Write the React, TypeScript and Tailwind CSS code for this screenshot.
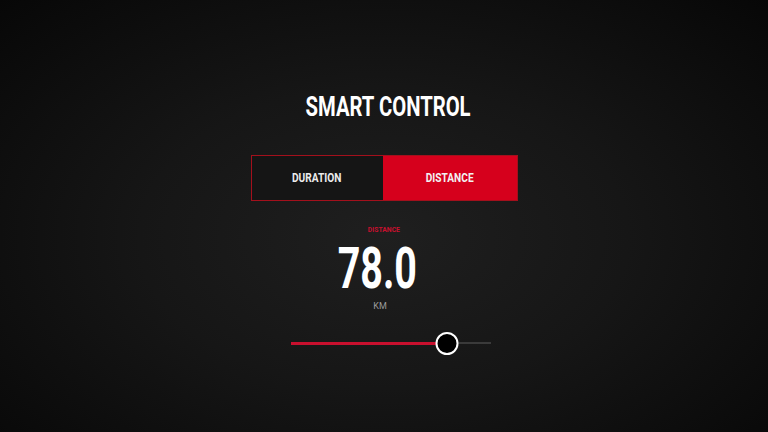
import React, { useState } from "react";

const font = { fontFamily: 'Roboto, "Liberation Sans", sans-serif' };

export default function App() {
  const [mode, setMode] = useState<"duration" | "distance">("distance");
  const value = 78.0;
  const pct = 78;

  return (
    <div
      className="w-[768px] h-[432px] flex flex-col items-center text-white bg-[radial-gradient(ellipse_at_50%_55%,#1f1f1f_0%,#161616_45%,#070707_100%)]"
      style={font}
    >
      {/* Title */}
      <h1 className="mt-[92px] ml-[8px] text-[27px] leading-[30px] font-bold scale-x-[0.75]">SMART CONTROL</h1>

      {/* Mode toggle */}
      <div className="mt-[33px] flex w-[267px] h-[46px] border border-[#a3101c]">
        <button
          onClick={() => setMode("duration")}
          className={`flex-1 flex items-center justify-center ${mode === "duration" ? "bg-[#d6001c]" : "bg-[#151515]"} text-[#ececec]`}
        >
          <span className="text-[13px] font-bold scale-x-[0.78]">DURATION</span>
        </button>
        <button
          onClick={() => setMode("distance")}
          className={`w-[134px] flex items-center justify-center ${mode === "distance" ? "bg-[#d6001c]" : "bg-[#151515]"} text-[#f2f2f2]`}
        >
          <span className="text-[13px] font-bold scale-x-[0.78]">DISTANCE</span>
        </button>
      </div>

      {/* Value */}
      <div className="mt-[24px] text-[8px] leading-[10px] font-bold text-[#c8102e] scale-x-[0.85]">DISTANCE</div>
      <div className="mt-[4px] ml-[-14px] text-[58px] leading-[58px] font-bold scale-x-[0.68]">{value.toFixed(1)}</div>
      <div className="mt-[4px] ml-[-8px] text-[9px] leading-[10px] text-[#9a9a9a]">KM</div>

      {/* Slider */}
      <div className="mt-[20px] ml-[14px] relative w-[200px] h-[24px] flex items-center">
        <div className="w-full h-[2px] bg-[#3a3a3a]" />
        <div className="absolute left-0 h-[3px] bg-[#c8102e]" style={{ width: `${pct}%` }} />
        <div
          className="absolute w-[23px] h-[23px] rounded-full bg-black border-2 border-white -translate-x-1/2"
          style={{ left: `${pct}%` }}
        />
      </div>
    </div>
  );
}
